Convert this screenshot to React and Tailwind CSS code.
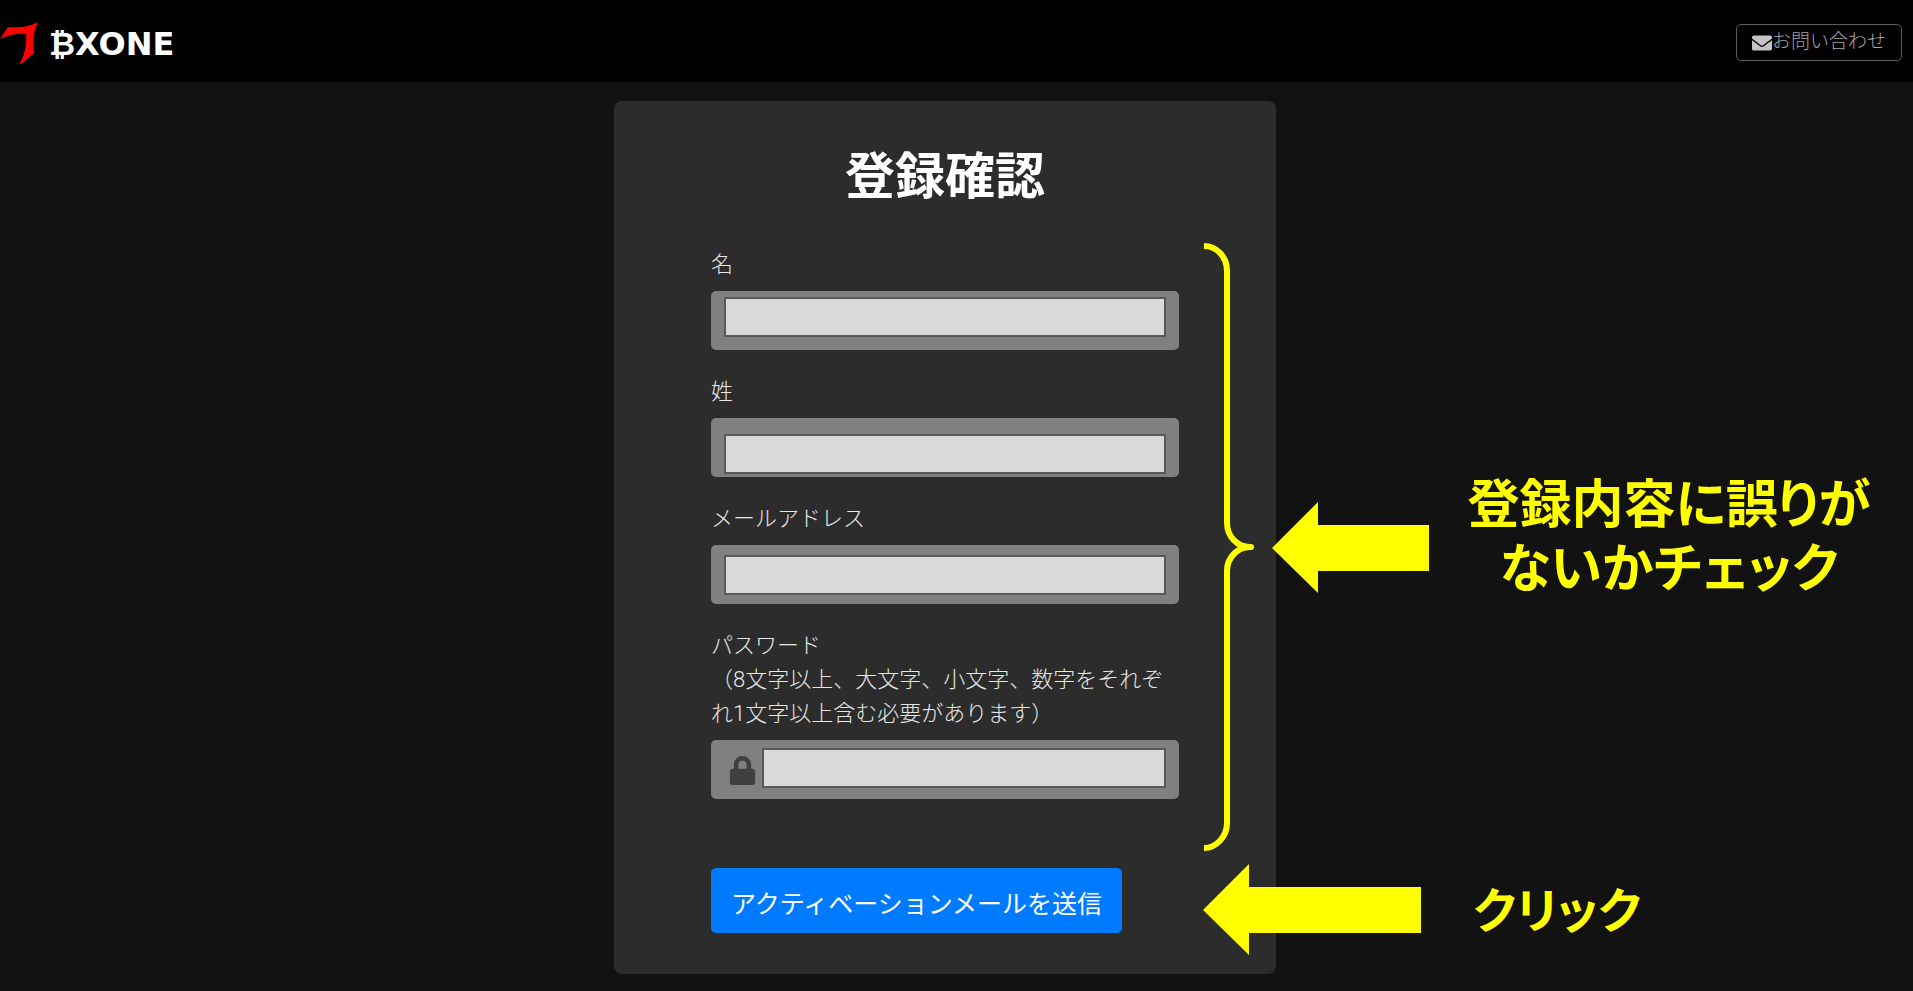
import { FaEnvelope, FaLock } from 'react-icons/fa';

const FIELDS = [
  { id: 'first-name', label: '名', type: 'text', pad: 'pt-1.5' },
  { id: 'last-name', label: '姓', type: 'text', pad: 'pt-4' },
  { id: 'email', label: 'メールアドレス', type: 'email', pad: 'pt-2.5' },
  {
    id: 'password',
    label: 'パスワード',
    hint: '（8文字以上、大文字、小文字、数字をそれぞれ1文字以上含む必要があります）',
    type: 'password',
    pad: 'pt-2',
    icon: true,
  },
];

function Logo() {
  return (
    <a href="#" className="flex items-center gap-2.5 pt-1.5 text-white" aria-label="BXONE">
      <svg width="39" height="44" viewBox="0 0 39 44" fill="#ff0000" aria-hidden="true">
        <path d="M0 17 L8 5 C18 6 29 5 38 0 C34 9 32 20 34 31 C29 36 24 40 19 43 C25 33 27 22 26 12 C17 11 8 13 0 17 Z" />
      </svg>
      <span className="font-['DejaVu_Sans',sans-serif] text-[32px] leading-10 font-bold">₿XONE</span>
    </a>
  );
}

function Header() {
  return (
    <header className="flex h-[82px] items-center justify-between bg-black pr-[11px]">
      <Logo />
      <button
        type="button"
        className="mt-[3px] flex h-[37px] items-center rounded-[5px] border border-[#5c5c5c] px-[15px] text-[19px] font-light text-[#a5a5a5]"
      >
        <FaEnvelope size={20} color="#c4c4c4" />
        お問い合わせ
      </button>
    </header>
  );
}

function Field({ id, label, hint, type, pad, icon }) {
  return (
    <div className="mb-[25px]">
      <label htmlFor={id} className="mb-[9px] block text-[22px] leading-[34px] font-light text-[#e6e6e6]">
        {label}
        {hint && <span className="block">{hint}</span>}
      </label>
      <div className={`flex h-[59px] rounded-[5px] bg-[#808080] px-[13px] ${pad}`}>
        {icon && <FaLock size={29} color="#404040" className="mt-2 mr-[5px] ml-1 shrink-0" />}
        <input
          id={id}
          type={type}
          className="h-10 min-w-0 flex-1 border-2 border-[#595959] bg-[#d9d9d9] px-2 text-[22px] text-black"
        />
      </div>
    </div>
  );
}

// Brace, arrows and notes that lie over the form
function Annotations() {
  return (
    <div className="pointer-events-none">
      <svg className="absolute top-[141px] left-[589px]" width="54" height="612" viewBox="0 0 54 612" fill="none" stroke="#ffff00" strokeWidth="6" aria-hidden="true">
        <path d="M1 4 C13 4 24 14 24 29 V281 C24 294 34 305 47 305 C34 305 24 316 24 329 V581 C24 595 13 606 1 606" />
        <path d="M45 305 H48" strokeLinecap="round" />
      </svg>
      <svg className="absolute top-[400px] left-[658px]" width="158" height="94" viewBox="0 0 158 94" fill="#ffff00" aria-hidden="true">
        <path d="M0 47 L46 1 V24 H157 V70 H46 V92 Z" />
      </svg>
      <svg className="absolute top-[762px] left-[589px]" width="219" height="94" viewBox="0 0 219 94" fill="#ffff00" aria-hidden="true">
        <path d="M0 47 L46 1 V24 H218 V70 H46 V92 Z" />
      </svg>
      <p className="absolute top-[373px] left-[835px] w-[440px] text-center text-[52px] leading-[64px] font-bold text-[#ffff00] [font-feature-settings:'palt']">
        登録内容に誤りが
        <br />
        ないかチェック
      </p>
      <p className="absolute top-[779px] left-[859px] text-[48px] leading-[64px] font-bold whitespace-nowrap text-[#ffff00] [font-feature-settings:'palt']">
        クリック
      </p>
    </div>
  );
}

export default function App() {
  return (
    <div className="min-h-screen overflow-x-hidden bg-[#121212] font-[Roboto,'Noto_Sans_CJK_JP',sans-serif]" lang="ja">
      <Header />
      <main className="pt-[19px] pr-[23px] pb-[17px]">
        <section className="relative mx-auto w-full max-w-[662px] rounded-lg bg-[#2c2c2c] px-[97px] pt-[38px] pb-[41px]">
          <h1 className="mb-[33px] text-center text-[50px] leading-[76px] font-bold text-white">登録確認</h1>
          <form onSubmit={(e) => e.preventDefault()}>
            {FIELDS.map((field) => (
              <Field key={field.id} {...field} />
            ))}
            <button
              type="submit"
              className="mt-11 h-[65px] rounded-[5px] bg-[#007bff] px-5 pt-2 text-[25px] whitespace-nowrap text-white"
            >
              アクティベーションメールを送信
            </button>
          </form>
          <Annotations />
        </section>
      </main>
    </div>
  );
}
